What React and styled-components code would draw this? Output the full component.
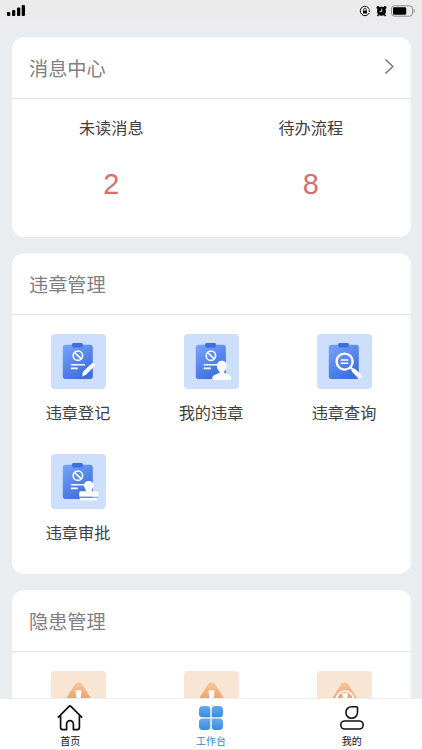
import styled, { createGlobalStyle } from 'styled-components';

const GlobalStyle = createGlobalStyle`
	* {
		box-sizing: border-box;
	}
	body {
		margin: 0;
		background-color: #e9edf0;
		font-family: 'Noto Sans CJK SC', sans-serif;
		color: #404040;
	}
`;

const Page = styled.div`
	display: flex;
	flex-direction: column;
	height: 750px;
	overflow: hidden;
`;

const StatusBar = styled.div`
	display: flex;
	flex: none;
	justify-content: space-between;
	align-items: flex-start;
	height: 37px;
	padding: 4px 7px 0;
	background: linear-gradient(#ebebeb 20px, #e9edf0 30px);
`;

const StatusIcons = styled.div`
	display: flex;
	align-items: center;
	gap: 4.5px;
	height: 13px;
`;

const Content = styled.main`
	display: flex;
	flex: 1;
	flex-direction: column;
	gap: 16px;
	min-height: 0;
	padding: 0 11.5px;
	overflow: hidden;
`;

const Card = styled.section`
	flex: none;
	height: ${({ $height }) => $height}px;
	background-color: #fff;
	border-radius: 12px;
`;

const CardHeader = styled.div`
	display: flex;
	align-items: center;
	justify-content: space-between;
	height: 62px;
	padding: 0 16px 0 17.5px;
	border-bottom: 1px solid #e5e5e7;
`;

const Title = styled.h2`
	margin: 1px 0 0;
	font-size: 19.2px;
	font-weight: 400;
	line-height: 28px;
	color: #808080;
`;

const Stats = styled.div`
	display: grid;
	grid-template-columns: 1fr 1fr;
`;

const Stat = styled.div`
	display: flex;
	flex-direction: column;
	align-items: center;
	padding-top: 16px;
`;

const StatLabel = styled.span`
	font-size: 16.2px;
	line-height: 24px;
`;

const StatValue = styled.span`
	margin-top: 28px;
	font-family: 'Liberation Sans', Arial, sans-serif;
	font-size: 29px;
	line-height: 34px;
	color: #d67070;
`;

const Grid = styled.div`
	display: grid;
	grid-template-columns: repeat(3, 1fr);
	padding-top: 19px;
`;

const GridItem = styled.div`
	display: flex;
	flex-direction: column;
	align-items: center;
	height: 120px;
`;

const Tile = styled.div`
	width: 55px;
	height: 55px;
	border-radius: 4px;
	background-color: ${({ $warm }) => ($warm ? '#f8e5d3' : '#cddffc')};
	svg {
		display: block;
	}
`;

const ItemLabel = styled.span`
	margin-top: 11px;
	font-size: 16.2px;
	line-height: 24px;
`;

const TabBar = styled.nav`
	display: grid;
	flex: none;
	grid-template-columns: repeat(3, 1fr);
	height: 52px;
	background-color: #fff;
	border-top: 1px solid #eee;
	border-bottom: 1px solid #e8e8e8;
`;

const Tab = styled.div`
	display: flex;
	flex-direction: column;
	align-items: center;
	padding-top: 6px;
	font-size: 10px;
	line-height: 14px;
	color: ${({ $active }) => ($active ? '#3c88c8' : '#111')};
	svg {
		display: block;
		margin-bottom: 3px;
	}
`;

const Signal = () => (
	<svg width="19" height="12" viewBox="0 0 19 12">
		<rect x="0" y="8" width="3.3" height="4" rx="1" />
		<rect x="5" y="6" width="3.3" height="6" rx="1" />
		<rect x="10" y="3.5" width="3.3" height="8.5" rx="1" />
		<rect x="14.7" y="1" width="3.3" height="11" rx="1" />
	</svg>
);

const RotationLock = () => (
	<svg width="12" height="12" viewBox="0 0 12 12" fill="none" stroke="#111">
		<path d="M10.4 4.4a4.7 4.7 0 1 0-.2 3.6" />
		<path d="M9 5.4h2.6L10.5 7z" fill="#111" stroke="none" />
		<rect x="4" y="5.5" width="4" height="3" fill="#111" stroke="none" />
		<path d="M4.7 5.5v-1a1.3 1.3 0 0 1 2.6 0v1" strokeWidth=".8" />
	</svg>
);

const Alarm = () => (
	<svg width="11" height="12" viewBox="0 0 11 12">
		<circle cx="5.5" cy="6.2" r="4.5" />
		<circle cx="2" cy="2.4" r="1.5" />
		<circle cx="9" cy="2.4" r="1.5" />
		<path d="M2.6 9.5 1.5 11M8.4 9.5 9.5 11" stroke="#000" strokeWidth="1.3" />
		<path d="M5.7 3.7v2.8H3.5" fill="none" stroke="#ebebeb" strokeWidth=".9" />
	</svg>
);

const Battery = () => (
	<svg width="24" height="12" viewBox="0 0 24 12">
		<rect x=".5" y=".8" width="21" height="10.4" rx="3" fill="none" stroke="#8c8c8c" />
		<rect x="2" y="2.3" width="13.2" height="7.4" rx="1.3" />
		<path d="M22.7 4v4q1.2-.7 1.2-2t-1.2-2" fill="#8c8c8c" />
	</svg>
);

const Arrow = () => (
	<svg width="11" height="20" viewBox="0 0 11 20">
		<path d="m1.5 1.5 7.3 7-7.3 7" fill="none" stroke="#777" strokeWidth="1.5" />
	</svg>
);

const Clipboard = ({ id, plain, children }) => (
	<svg width="55" height="55" viewBox="0 0 55 55">
		<defs>
			<linearGradient id={id} x1="0" y1="0" x2=".6" y2="1">
				<stop offset="0" stopColor="#78a4f8" />
				<stop offset="1" stopColor="#3c6fdf" />
			</linearGradient>
		</defs>
		<rect x="11.8" y="10.8" width="30" height="34.2" rx="2.8" fill={`url(#${id})`} />
		<rect x="21.2" y="9" width="10.6" height="4.4" rx="1.3" fill="#3d6edb" />
		{!plain && (
			<g fill="none" stroke="#fff" strokeWidth="1.6">
				<circle cx="26.9" cy="21.7" r="4.7" />
				<path d="m23.7 18.5 6.4 6.4M19.8 30.7h14M19.8 34.4h7" />
			</g>
		)}
		{children}
	</svg>
);

const RegisterIcon = () => (
	<Clipboard id="register">
		<path d="m31 42.4 1-4.6 8.6-8.4q1.4-1 2.7.2t.2 2.6l-8.5 8.5z" fill="#fff" />
	</Clipboard>
);

const MineIcon = () => (
	<Clipboard id="mine">
		<path
			d="M37.8 26.8c-3 0-4.9 2.2-4.9 5 0 2.4 1.1 4.6 2.6 5.6v1.3c-1 1-6.9 1.6-7.3 5.3 0 1.3.7 2 2 2h15.2c1.3 0 2-.7 2-2-.4-3.7-6.3-4.3-7.3-5.3v-1.3c1.5-1 2.6-3.2 2.6-5.6 0-2.8-1.9-5-4.9-5z"
			fill="#fff"
		/>
	</Clipboard>
);

const SearchIcon = () => (
	<Clipboard id="search" plain>
		<g fill="none" stroke="#fff">
			<circle cx="27.6" cy="27.6" r="8" strokeWidth="2.4" />
			<path d="M23.8 26h7.6M23.8 29.3h7.6" strokeWidth="1.5" />
			<path d="m33.4 33.4 3 3" strokeWidth="2.2" />
			<path d="m37 36.8 5.4 5.4" strokeWidth="4.4" strokeLinecap="round" />
		</g>
	</Clipboard>
);

const ApproveIcon = () => (
	<Clipboard id="approve">
		<g fill="#fff">
			<path d="M37.8 27c-2.8 0-4.9 2-4.9 4.6 0 2.3 2 3.4 2 5.6h-5.2q-1.5 0-1.5 1.5v4h19.1v-4q0-1.5-1.5-1.5h-5.2c0-2.2 2-3.3 2-5.6 0-2.6-2-4.6-4.8-4.6z" />
			<path d="M28.8 44h17.7v1q0 1.5-1.5 1.5H30.3q-1.5 0-1.5-1.5z" />
		</g>
		<path d="M28.2 43.3h19.1" stroke="#6d95e8" strokeWidth=".8" />
	</Clipboard>
);

const Warning = ({ id, ring, dot }) => (
	<svg width="55" height="55" viewBox="0 0 55 55">
		<defs>
			<linearGradient id={id} x1="0" y1="0" x2="0" y2="1">
				<stop offset="0" stopColor="#f5c8a2" />
				<stop offset="1" stopColor="#e47f3c" />
			</linearGradient>
		</defs>
		<path
			d="M24.2 13q3.4-3.6 6.8 0L47 39q1.6 4-2.4 4h-34q-4 0-2.4-4z"
			fill={`url(#${id})`}
		/>
		{ring && <circle cx="28" cy="29" r="8.8" fill="#eda873" stroke="#fff" strokeWidth="1.8" />}
		<path
			d={
				ring
					? 'M25 22.3q3-.8 6 0l-1.4 8h-3.2z'
					: 'M24.6 20.4q0-1.2 1.3-1.2h3.3q1.3 0 1.3 1.2l-1.4 10.8H26z'
			}
			fill="#fff"
		/>
		{dot && <circle cx="37.5" cy="30.8" r="4" fill="#fff" />}
	</svg>
);

const HomeIcon = () => (
	<svg width="26" height="26" viewBox="0 0 26 26" fill="none" stroke="#111" strokeWidth="1.7">
		<path
			d="M1.4 12.2 12.1 1.4q.9-.8 1.8 0l10.7 10.8M3.6 10.5v12.1q0 2 2 2h4V19a3.4 3.4 0 0 1 6.8 0v5.6h4q2 0 2-2V10.5"
			strokeLinecap="round"
			strokeLinejoin="round"
		/>
	</svg>
);

const AppsIcon = () => (
	<svg width="26" height="26" viewBox="0 0 26 26">
		<defs>
			<linearGradient id="apps" x1="0" y1="0" x2="0" y2="1">
				<stop offset="0" stopColor="#64abed" />
				<stop offset="1" stopColor="#398bdc" />
			</linearGradient>
		</defs>
		<g fill="url(#apps)">
			<path d="M4.8 1h4q3.5 0 3.5 3.5v7.7H4.5Q1 12.2 1 8.7V4.8Q1 1 4.8 1z" />
			<path d="M17.2 1h4Q25 1 25 4.8v3.9q0 3.5-3.5 3.5h-7.8V4.5q0-3.5 3.5-3.5z" />
			<path d="M4.5 13.6h7.8v7.9q0 3.5-3.5 3.5h-4Q1 25 1 21.2v-4.1q0-3.5 3.5-3.5z" />
			<path d="M13.7 13.6h7.8q3.5 0 3.5 3.5v4.1q0 3.8-3.8 3.8h-4q-3.5 0-3.5-3.5z" />
		</g>
	</svg>
);

const UserIcon = () => (
	<svg width="26" height="26" viewBox="0 0 26 26" fill="none" stroke="#111" strokeWidth="1.6">
		<path d="M12.7 1.7h4.6q1.2 0 1.2 1.2v4.7a5.8 5.8 0 1 1-5.8-5.9z" />
		<rect x="1.8" y="16" width="22.4" height="8" rx="4" />
	</svg>
);

const VIOLATIONS = [
	{ label: '违章登记', icon: <RegisterIcon /> },
	{ label: '我的违章', icon: <MineIcon /> },
	{ label: '违章查询', icon: <SearchIcon /> },
	{ label: '违章审批', icon: <ApproveIcon /> },
];

const HAZARDS = [
	<Warning key="w1" id="w1" />,
	<Warning key="w2" id="w2" dot />,
	<Warning key="w3" id="w3" ring />,
];

const App = () => (
	<Page>
		<GlobalStyle />
		<StatusBar>
			<Signal />
			<StatusIcons>
				<RotationLock />
				<Alarm />
				<Battery />
			</StatusIcons>
		</StatusBar>
		<Content>
			<Card $height={200}>
				<CardHeader>
					<Title>消息中心</Title>
					<Arrow />
				</CardHeader>
				<Stats>
					<Stat>
						<StatLabel>未读消息</StatLabel>
						<StatValue>2</StatValue>
					</Stat>
					<Stat>
						<StatLabel>待办流程</StatLabel>
						<StatValue>8</StatValue>
					</Stat>
				</Stats>
			</Card>
			<Card $height={320.5}>
				<CardHeader>
					<Title>违章管理</Title>
				</CardHeader>
				<Grid>
					{VIOLATIONS.map(({ label, icon }) => (
						<GridItem key={label}>
							<Tile>{icon}</Tile>
							<ItemLabel>{label}</ItemLabel>
						</GridItem>
					))}
				</Grid>
			</Card>
			<Card $height={200}>
				<CardHeader>
					<Title>隐患管理</Title>
				</CardHeader>
				<Grid>
					{HAZARDS.map(icon => (
						<GridItem key={icon.key}>
							<Tile $warm>{icon}</Tile>
						</GridItem>
					))}
				</Grid>
			</Card>
		</Content>
		<TabBar>
			<Tab>
				<HomeIcon />
				首页
			</Tab>
			<Tab $active>
				<AppsIcon />
				工作台
			</Tab>
			<Tab>
				<UserIcon />
				我的
			</Tab>
		</TabBar>
	</Page>
);

export default App;
